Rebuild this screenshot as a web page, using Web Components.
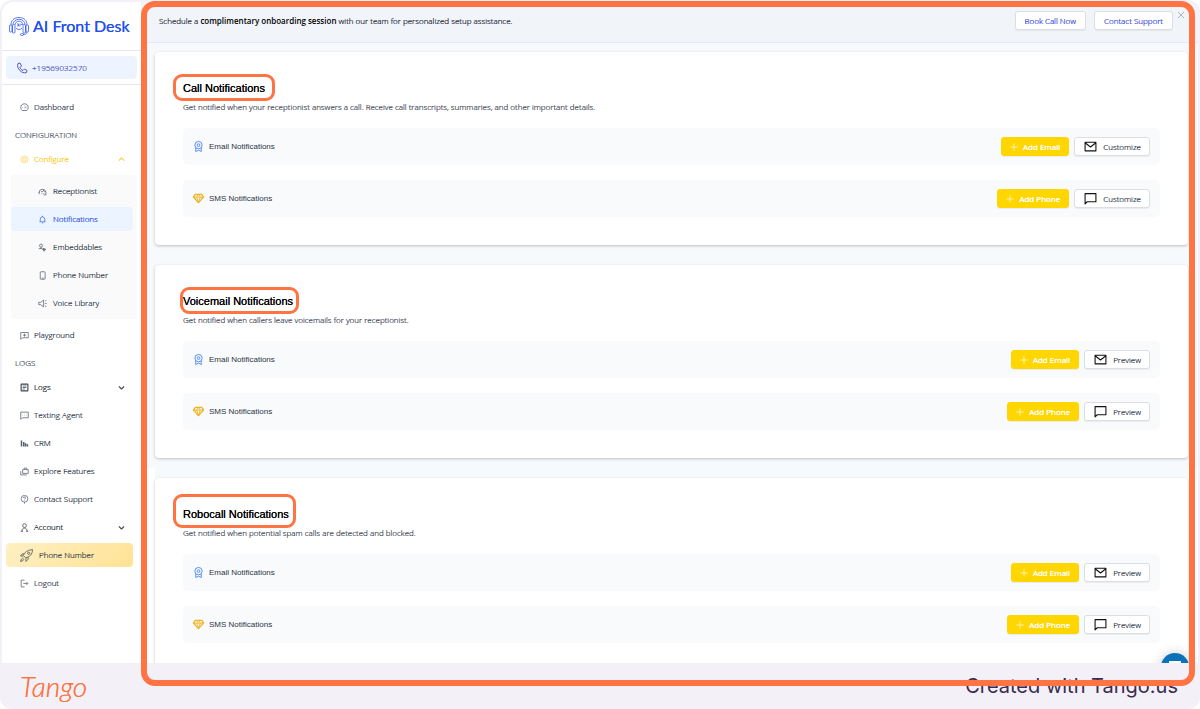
<!DOCTYPE html>
<html lang="en">
<head>
<meta charset="utf-8">
<meta name="viewport" content="width=device-width, initial-scale=1">
<title>AI Front Desk - Notifications</title>
<style>
  :root {
    --ff: "Open Sans", "Noto Sans", sans-serif;
    --ff-alt: "Liberation Sans", Arial, sans-serif;
    --fs-sm: 8px;
    --fs-md: 11px;
    --accent: #ff7442;
    --gold: #ffd600;
    --frame: #f3f1f7;
    --line: #e4e6f7;
    --text: #2f3a4a;
  }
  html, body { margin: 0; height: 100%; background: #fff; }
  body {
    font-family: var(--ff);
    font-size: var(--fs-sm);
    font-weight: 300;
    color: var(--text);
    text-shadow: 0 0 currentColor;
  }
</style>
</head>
<body>
<desk-app>
  <desk-sidebar slot="sidebar" phone="+19569032570">
    <nav-item icon="gauge">Dashboard</nav-item>
    <nav-label>CONFIGURATION</nav-label>
    <nav-item icon="gear" tone="gold" chevron="up">Configure</nav-item>
    <nav-group>
      <nav-item icon="headset" nested>Receptionist</nav-item>
      <nav-item icon="bell" nested active>Notifications</nav-item>
      <nav-item icon="embed" nested>Embeddables</nav-item>
      <nav-item icon="mobile" nested>Phone Number</nav-item>
      <nav-item icon="speaker" nested>Voice Library</nav-item>
    </nav-group>
    <nav-item icon="chatPlus">Playground</nav-item>
    <nav-label>LOGS</nav-label>
    <nav-item icon="logs" chevron="down" tone="dark">Logs</nav-item>
    <nav-item icon="chatDots">Texting Agent</nav-item>
    <nav-item icon="bars">CRM</nav-item>
    <nav-item icon="briefcase">Explore Features</nav-item>
    <nav-item icon="help">Contact Support</nav-item>
    <nav-item icon="user" chevron="down" tone="dark">Account</nav-item>
    <nav-item icon="rocket" promo>Phone Number</nav-item>
    <nav-item icon="logout">Logout</nav-item>
  </desk-sidebar>

  <desk-banner slot="banner">
    Schedule a <b>complimentary onboarding session</b> with our team for personalized setup assistance.
    <desk-button slot="actions" tone="link">Book Call Now</desk-button>
    <desk-button slot="actions" tone="link">Contact Support</desk-button>
  </desk-banner>

  <notify-card heading="Call Notifications" mark="-6px -10px -5px -10px">
    <span slot="about">Get notified when your receptionist answers a call. Receive call transcripts, summaries, and other important details.</span>
    <notify-row kind="email" action="Customize"></notify-row>
    <notify-row kind="sms" action="Customize"></notify-row>
  </notify-card>
  <notify-card heading="Voicemail Notifications" mark="-6px -6px -5px -3px">
    <span slot="about">Get notified when callers leave voicemails for your receptionist.</span>
    <notify-row kind="email" action="Preview"></notify-row>
    <notify-row kind="sms" action="Preview"></notify-row>
  </notify-card>
  <notify-card heading="Robocall Notifications" mark="-12px -7px -6px -10px">
    <span slot="about">Get notified when potential spam calls are detected and blocked.</span>
    <notify-row kind="email" action="Preview"></notify-row>
    <notify-row kind="sms" action="Preview"></notify-row>
  </notify-card>
</desk-app>

<script>
(function() {
  'use strict';

  // Stroke icons on a 24 unit grid
  const ICONS = {
    gauge: '<path d="M6 20a10 10 0 1 1 12 0z"/><path d="M12 14l4-5M6 12h1M12 6v1M17 13h1"/>',
    gear: '<path d="M12 2l3 3h4l1 4 2 3-2 3-1 4h-4l-3 3-3-3H5l-1-4-2-3 2-3 1-4h4z"/><circle cx="12" cy="12" r="4"/>',
    headset: '<path d="M3 16a9 9 0 0 1 18-2v7h-6"/><path d="M3 14v5M8 12c3 1 6 0 7-3 1 3 2 4 4 4"/><path d="M10 16v1M15 16v1" stroke-width="3"/>',
    bell: '<path d="M4 18h16M6 18v-7a6 6 0 0 1 12 0v7M12 2v3M10 21h4"/>',
    embed: '<circle cx="8" cy="7" r="4"/><path d="M8 11v5M2 15h8l3 3"/><path d="M13 14l8 3-4 1-1 4z" fill="currentColor"/>',
    mobile: '<rect x="6" y="2" width="13" height="20" rx="2"/><path d="M10 19h5"/>',
    speaker: '<path d="M2 9h5l8-6v18l-8-6H2zM19 5l3-1M19 12h4M19 19l3 1"/>',
    chatPlus: '<path d="M2 4h20v14H7l-5 4zM12 7v8M8 11h8"/>',
    logs: '<rect x="3" y="3" width="18" height="18" rx="1" stroke-width="3"/><path d="M7 8h10M7 12h10M7 16h6"/>',
    chatDots: '<path d="M2 3h20v15H7l-5 4zM7 11h1M12 11h1M17 11h1"/>',
    bars: '<path d="M4 4v16M10 8v12M15 11v9M20 14v6" stroke-width="4"/>',
    briefcase: '<path d="M7 7h15v10H7zM11 7V3h7v4M2 11v10h16"/>',
    help: '<circle cx="12" cy="10" r="9"/><path d="M12 19v4M9 8c0-4 6-4 6 0 0 2-3 2-3 4M12 14v1"/>',
    user: '<circle cx="12" cy="7" r="5"/><path d="M5 22c0-11 14-11 14 0M2 22h6M16 22h6"/>',
    rocket: '<g stroke-width="1.6"><path d="M10 16l-4-4c2-6 8-10 17-11 0 9-5 14-13 15z"/><circle cx="16" cy="8" r="2"/><path d="M8 9H4l-3 4 5 0M15 15v4l-4 4v-6M6 17c-3 0-4 2-5 6 4-1 6-2 6-5"/></g>',
    logout: '<path d="M12 3H3v18h9M9 12h11M17 8l4 4-4 4"/>',
    up: '<path d="M5 15l7-7 7 7" stroke-width="3"/>',
    down: '<path d="M5 9l7 7 7-7" stroke-width="3"/>',
    phone: '<path d="M4 3l4-1 3 6-3 3c1 3 3 5 6 6l3-3 5 3-1 4c-9 4-21-9-17-18z"/>',
    medal: '<circle cx="12" cy="9" r="8"/><circle cx="12" cy="9" r="3"/><path d="M6 15v8l6-3 6 3v-8"/>',
    gem: '<path d="M5 3h14l4 6-11 12L1 9z" stroke-width="3"/><path d="M2 9h20M8 9l4 11 4-11M8 9l4-6 4 6"/>',
    plus: '<path d="M12 1v22M1 12h22"/>',
    mail: '<path d="M2 4h20v16H2zM2 5l10 8 10-8"/>',
    message: '<path d="M2 3h20v15H6l-4 4z"/>',
    close: '<path d="M3 3l18 18M21 3L3 21"/>'
  };

  // Attaches an open root and fills it from a template
  function build(host, html) {
    const template = document.createElement('template');
    template.innerHTML = html;
    host.attachShadow({ mode: 'open' }).appendChild(template.content.cloneNode(true));
  }

  class DeskIcon extends HTMLElement {
    connectedCallback() {
      if (this.shadowRoot) return;
      build(this, `
        <style>
          :host { display: block; flex: none; width: 9px; height: 9px; }
          svg { display: block; width: 100%; height: 100%; overflow: visible; }
        </style>
        <svg viewBox="0 0 24 24" fill="none" stroke="currentColor" stroke-width="2" stroke-linejoin="round" aria-hidden="true">${ICONS[this.getAttribute('name')] || ''}</svg>
      `);
    }
  }

  class DeskButton extends HTMLElement {
    connectedCallback() {
      if (this.shadowRoot) return;
      const icon = this.getAttribute('icon');
      build(this, `
        <style>
          :host { display: block; flex: none; }
          button {
            display: flex;
            align-items: center;
            gap: 6px;
            height: 19px;
            padding: 0 8px 0 9px;
            border: 1px solid #dcdee4;
            border-radius: 3px;
            background: #fff;
            box-shadow: 0 1px 1px rgba(0, 0, 0, 0.06);
            color: var(--text);
            font: inherit;
            line-height: 12px;
            text-shadow: inherit;
            white-space: nowrap;
            cursor: pointer;
          }
          desk-icon { width: 13px; height: 13px; color: #111; }
          :host([tone="link"]) button { padding: 0 9px; color: #3146dc; }
          :host([tone="gold"]) button {
            gap: 5px;
            padding: 0 8px;
            border-color: var(--gold);
            background: var(--gold);
            color: #fff;
            font-weight: 400;
          }
          :host([tone="gold"]) desk-icon { width: 8px; height: 8px; color: #fff; }
        </style>
        <button type="button">${icon ? `<desk-icon name="${icon}"></desk-icon>` : ''}<slot></slot></button>
      `);
    }
  }

  class NavItem extends HTMLElement {
    connectedCallback() {
      if (this.shadowRoot) return;
      const chevron = this.getAttribute('chevron');
      build(this, `
        <style>
          :host { display: block; margin: 0 4px 4px 0; }
          a {
            display: flex;
            align-items: center;
            gap: 5px;
            height: 24px;
            padding: 0 7px 0 14px;
            border-radius: 4px;
            color: var(--text);
            line-height: 12px;
            text-decoration: none;
          }
          span { flex: 1; }
          desk-icon { opacity: 0.8; }
          :host([tone="gold"]) a { color: #fbc50e; }
          :host([tone="dark"]) a { color: #111827; }
          :host([nested]) a { padding-left: 27px; gap: 6px; }
          :host([active]) a { background: #ebf4ff; color: #1f48e0; }
          :host([promo]) a { background: linear-gradient(135deg, #fff0c4, #ffe294); gap: 6px; }
          :host([promo]) desk-icon:first-child { width: 13px; height: 13px; }
        </style>
        <a href="#">
          <desk-icon name="${this.getAttribute('icon')}"></desk-icon>
          <span><slot></slot></span>
          ${chevron ? `<desk-icon name="${chevron}"></desk-icon>` : ''}
        </a>
      `);
    }
  }

  class NavLabel extends HTMLElement {
    connectedCallback() {
      if (this.shadowRoot) return;
      build(this, `
        <style>
          :host { display: block; padding-left: 9px; color: #4b5563; line-height: 24px; }
        </style>
        <slot></slot>
      `);
    }
  }

  class NavGroup extends HTMLElement {
    connectedCallback() {
      if (this.shadowRoot) return;
      build(this, `
        <style>
          :host { display: block; margin: 0 0 4px 5px; padding-top: 4px; background: #fafafa; overflow: hidden; }
        </style>
        <slot></slot>
      `);
    }
  }

  class DeskSidebar extends HTMLElement {
    connectedCallback() {
      if (this.shadowRoot) return;
      const phone = this.getAttribute('phone');
      build(this, `
        <style>
          :host { display: block; background: #fff; }
          .brand {
            display: flex;
            align-items: center;
            gap: 4px;
            height: 48px;
            padding-left: 7px;
            border-bottom: 1px solid var(--line);
            color: #2450f0;
            font: 400 16px/20px Lato, sans-serif;
            white-space: nowrap;
          }
          .brand svg { flex: none; width: 20px; height: 20px; }
          .line { padding: 5px 4px; border-bottom: 1px solid var(--line); }
          .line a {
            display: flex;
            align-items: center;
            gap: 4px;
            height: 23px;
            padding-left: 10px;
            border-radius: 4px;
            background: #edf4ff;
            color: #4f58c0;
            line-height: 12px;
            text-decoration: none;
          }
          .line desk-icon { width: 12px; height: 12px; }
          nav { padding: 10px 4px 0; }
        </style>
        <div class="brand">
          <svg viewBox="0 0 40 40" fill="none" stroke="currentColor" stroke-width="1.5" aria-hidden="true">
            <path d="M4 18C3 -2 37 -2 36 18M8 17C9 3 31 3 32 17"/>
            <path d="M13 17c-1-9 15-9 14 0M14 24c2 4 10 4 12 0"/>
            <path d="M16 16h3v4h-3M22 15v6M24 17h3"/>
            <rect x="1" y="18" width="5" height="14" rx="2"/>
            <rect x="7" y="17" width="5" height="17" rx="2"/>
            <rect x="28" y="17" width="5" height="17" rx="2"/>
            <rect x="34" y="18" width="5" height="14" rx="2"/>
            <path d="M36 32c0 4-3 5-8 5"/>
            <rect x="23" y="35" width="6" height="4" rx="2"/>
          </svg>
          <span>AI Front Desk</span>
        </div>
        <div class="line"><a href="tel:${phone}"><desk-icon name="phone"></desk-icon><span>${phone}</span></a></div>
        <nav aria-label="Main"><slot></slot></nav>
      `);
    }
  }

  class DeskBanner extends HTMLElement {
    connectedCallback() {
      if (this.shadowRoot) return;
      build(this, `
        <style>
          :host {
            display: flex;
            align-items: flex-start;
            gap: 8px;
            height: 31px;
            padding: 9px 13px 0 18px;
            border-bottom: 1px solid var(--line);
            background: #f1f4f9;
          }
          p { flex: 1; margin: 0; line-height: 19px; color: #1c2636; }
          ::slotted(b) { color: #000; font-weight: 600; text-shadow: none; }
          .close {
            display: block;
            width: 8px;
            height: 8px;
            margin-left: -4px;
            padding: 0;
            border: 0;
            background: none;
            color: #9097a3;
          }
          .close desk-icon { width: 8px; height: 8px; }
        </style>
        <p><slot></slot></p>
        <slot name="actions"></slot>
        <button class="close" type="button" aria-label="Close"><desk-icon name="close"></desk-icon></button>
      `);
    }
  }

  class NotifyRow extends HTMLElement {
    connectedCallback() {
      if (this.shadowRoot) return;
      const email = this.getAttribute('kind') === 'email';
      build(this, `
        <style>
          :host {
            display: flex;
            align-items: center;
            gap: 5px;
            height: 37px;
            padding: 0 10px;
            border-radius: 5px;
            background: #f9fafc;
          }
          .name { flex: 1; color: #2b3444; font-family: var(--ff-alt); text-shadow: none; }
          .kind { width: 11px; height: 11px; color: ${email ? '#4b86f5' : '#efb322'}; }
        </style>
        <desk-icon class="kind" name="${email ? 'medal' : 'gem'}"></desk-icon>
        <span class="name">${email ? 'Email' : 'SMS'} Notifications</span>
        <desk-button tone="gold" icon="plus">${email ? 'Add Email' : 'Add Phone'}</desk-button>
        <desk-button icon="${email ? 'mail' : 'message'}">${this.getAttribute('action')}</desk-button>
      `);
    }
  }

  class NotifyCard extends HTMLElement {
    connectedCallback() {
      if (this.shadowRoot) return;
      build(this, `
        <style>
          :host {
            display: block;
            padding: 28px;
            border-radius: 4px;
            background: #fff;
            box-shadow: 0 1px 3px rgba(0, 0, 0, 0.24);
          }
          h2 {
            position: relative;
            width: fit-content;
            margin: 0 0 5px;
            color: #000;
            font: 400 var(--fs-md)/16px var(--ff-alt);
          }
          /* Outline drawn around the heading */
          .mark {
            position: absolute;
            inset: ${this.getAttribute('mark')};
            border: 3px solid var(--accent);
            border-radius: 9px;
          }
          p { margin: 0 0 15px; color: #3f4856; line-height: 12px; }
          .rows { display: grid; gap: 15px; }
        </style>
        <h2>${this.getAttribute('heading')}<span class="mark"></span></h2>
        <p><slot name="about"></slot></p>
        <div class="rows"><slot></slot></div>
      `);
    }
  }

  class DeskApp extends HTMLElement {
    connectedCallback() {
      if (this.shadowRoot) return;
      build(this, `
        <style>
          :host {
            position: relative;
            display: flex;
            flex-direction: column;
            box-sizing: border-box;
            height: 100vh;
            padding: 2px 2px 0;
            border-radius: 12px;
            background: var(--frame);
            overflow: hidden;
          }
          .window {
            position: relative;
            flex: 1;
            display: grid;
            grid-template-columns: 139px 1fr;
            min-height: 0;
            border-radius: 12px 12px 0 0;
            background: #fff;
            overflow: hidden;
          }
          .content {
            padding: 9px 10px 0 14px;
            background: linear-gradient(#f6fafd, #f6fafd) no-repeat 0 0 / 100% 425px;
          }
          .cards { display: grid; gap: 20px; background: #f6fafd; }
          .chat {
            position: absolute;
            right: 9px;
            bottom: -18px;
            display: grid;
            place-items: center;
            width: 28px;
            height: 28px;
            padding: 0;
            border: 0;
            border-radius: 50%;
            background: #0b72b9;
            box-shadow: 0 0 12px rgba(0, 0, 0, 0.2);
          }
          .chat svg { width: 14px; height: 14px; }
          footer {
            display: flex;
            align-items: center;
            justify-content: space-between;
            height: 46px;
            padding: 0 20px 0 18px;
            color: #3a2b50;
            font: 400 20px/24px Inter, sans-serif;
            text-shadow: none;
          }
          .tango {
            color: var(--accent);
            font: italic 300 28px/32px Lato, cursive;
            text-shadow: 0 0 currentColor;
          }
          .focus {
            position: absolute;
            inset: 1px 5px 23px 141px;
            border: 6px solid var(--accent);
            border-radius: 14px;
            pointer-events: none;
          }
        </style>
        <div class="window">
          <slot name="sidebar"></slot>
          <main>
            <slot name="banner"></slot>
            <div class="content"><div class="cards"><slot></slot></div></div>
          </main>
          <button class="chat" type="button" aria-label="Open chat">
            <svg viewBox="0 0 14 14" aria-hidden="true"><path d="M1 1h12v8l-3 3-2-2H1z" fill="#fff"/></svg>
          </button>
        </div>
        <footer><span class="tango">Tango</span><span>Created with Tango.us</span></footer>
        <div class="focus"></div>
      `);
    }
  }

  customElements.define('desk-icon', DeskIcon);
  customElements.define('desk-button', DeskButton);
  customElements.define('nav-item', NavItem);
  customElements.define('nav-label', NavLabel);
  customElements.define('nav-group', NavGroup);
  customElements.define('desk-sidebar', DeskSidebar);
  customElements.define('desk-banner', DeskBanner);
  customElements.define('notify-row', NotifyRow);
  customElements.define('notify-card', NotifyCard);
  customElements.define('desk-app', DeskApp);
})();
</script>
</body>
</html>
